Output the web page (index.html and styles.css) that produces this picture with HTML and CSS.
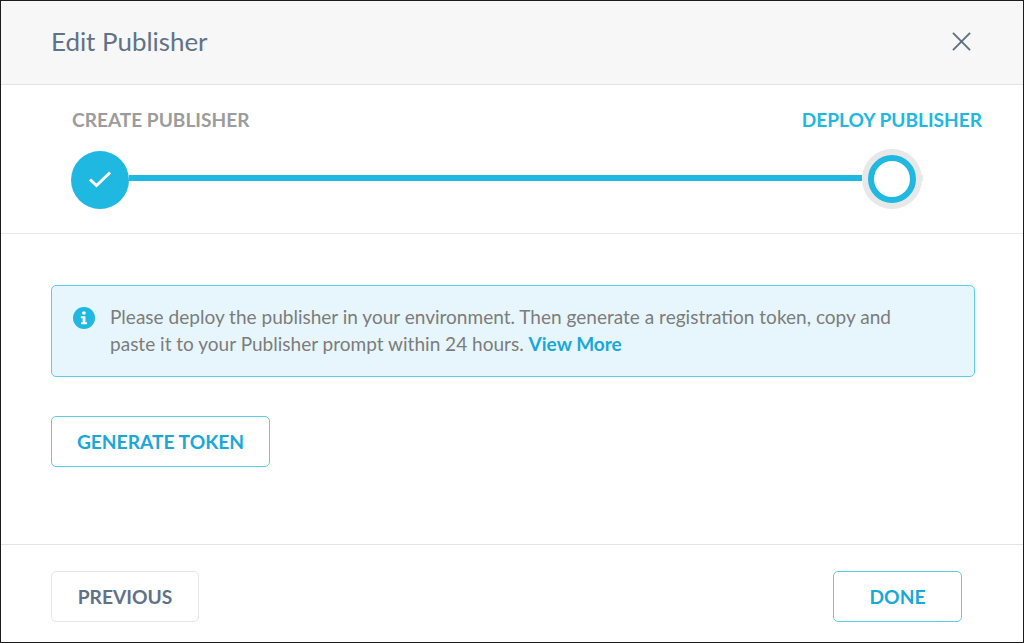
FILE: index.html
```html
<!DOCTYPE html>
<html lang="en">
<head>
<meta charset="utf-8">
<title>Edit Publisher</title>
<link rel="stylesheet" href="styles.css">
</head>
<body>
<div class="modal">
  <header class="head">
    <h1 class="title">Edit Publisher</h1>
    <svg class="close" width="20" height="20" viewBox="0 0 20 20"><path d="M1 1L19 19M19 1L1 19" fill="none" stroke="#5f6f82" stroke-width="2"/></svg>
  </header>
  <section class="steps">
    <div class="labels">
      <span class="label done-label">CREATE PUBLISHER</span>
      <span class="label active-label">DEPLOY PUBLISHER</span>
    </div>
    <div class="track">
      <div class="dot-done">
        <svg class="check" width="24" height="18" viewBox="0 0 24 18"><path d="M2 9.5L8.5 15.5L22 2.5" fill="none" stroke="#fff" stroke-width="3"/></svg>
      </div>
      <div class="line"></div>
      <div class="dot-active"><div class="ring"></div></div>
    </div>
  </section>
  <main class="body">
    <div class="alert">
      <svg class="info" width="22" height="22" viewBox="0 0 22 22"><circle cx="11" cy="11" r="11" fill="#1eb8e0"/><rect x="9.2" y="4.6" width="3.4" height="3" rx="1" fill="#fff"/><path d="M7.8 9.3H12.4V15.3H14V17.2H8V15.3H9.6V11.2H7.8Z" fill="#fff"/></svg>
      <p class="msg">Please deploy the publisher in your environment. Then generate a registration token, copy and paste it to your Publisher prompt within 24 hours. <a class="more">View More</a></p>
    </div>
    <button class="btn btn-blue btn-token">GENERATE TOKEN</button>
  </main>
  <footer class="foot">
    <button class="btn btn-grey btn-prev">PREVIOUS</button>
    <button class="btn btn-blue btn-done">DONE</button>
  </footer>
</div>
</body>
</html>
```
FILE: styles.css
```css
* { box-sizing: border-box; }
html, body { margin: 0; padding: 0; }
body { width: 1024px; height: 643px; background: #fff; font-family: Lato, sans-serif; overflow: hidden; }
.modal { width: 1024px; height: 643px; border: 1px solid #1c1c1c; display: flex; flex-direction: column; background: #fff; }
.head { height: 84px; flex: none; background: #f7f7f7; border-bottom: 1px solid #e4e4e4; display: flex; align-items: center; justify-content: space-between; padding: 0 52px 4px 50px; }
.title { margin: 0; font-size: 25.9px; font-weight: 400; color: #5f7288; }
.close { display: block; width: 19px; height: 19px; margin-top: 2px; }
.steps { height: 149px; flex: none; border-bottom: 1px solid #e9e9e9; padding: 0 41px 0 70px; }
.labels { display: flex; justify-content: space-between; padding: 23px 0 0 1px; height: 64px; }
.label { font-size: 19.1px; font-weight: 700; line-height: 23px; }
.done-label { color: #9c9c9c; }
.active-label { color: #1eb8e0; }
.track { display: flex; align-items: center; width: 852px; position: relative; }
.track::after { content: ""; position: absolute; right: 0; top: 26px; width: 4px; height: 6px; background: #e8e8e8; }
.dot-done { width: 58px; height: 58px; border-radius: 50%; background: #1eb8e0; flex: none; display: flex; align-items: center; justify-content: center; margin-top: 2px; }
.check { margin-bottom: 2px; }
.line { flex: 1; height: 6px; background: #1eb8e0; margin-bottom: 2px; }
.dot-active { width: 60px; height: 60px; border-radius: 50%; background: #e8e8e8; flex: none; display: flex; align-items: center; justify-content: center; position: relative; z-index: 1; margin-right: 1px; }
.ring { width: 48px; height: 48px; border-radius: 50%; background: #fff; border: 6px solid #1eb8e0; }
.body { flex: 1; padding: 51px 49px 0 50px; }
.alert { width: 924px; height: 92px; border: 1px solid #5fcdea; border-radius: 5px; background: #e7f6fc; display: flex; padding: 17px 20px 0 21px; }
.info { flex: none; margin-top: 4px; }
.msg { margin: 0 0 0 15px; width: 800px; font-size: 19.05px; line-height: 27px; color: #7c7c7c; }
.more { color: #1aa8d8; font-weight: 700; }
.btn { display: block; background: #fff; border-radius: 5px; font-family: Lato, sans-serif; font-size: 19.2px; font-weight: 700; height: 51px; padding: 0; }
.btn-blue { border: 1px solid #5fcdea; color: #1aa8d8; }
.btn-grey { border: 1px solid #e6e6e6; color: #5f7288; }
.btn-token { width: 219px; margin-top: 39px; }
.foot { height: 98px; flex: none; border-top: 1px solid #e4e4e4; display: flex; justify-content: space-between; align-items: flex-start; padding: 26px 61px 0 50px; }
.btn-prev { width: 148px; }
.btn-done { width: 129px; }
```
